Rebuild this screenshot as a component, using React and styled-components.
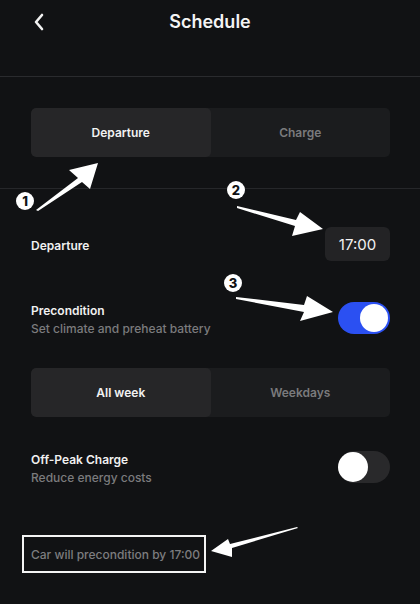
import React from "react";
import styled, { createGlobalStyle } from "styled-components";

const Global = createGlobalStyle`
  html, body { margin: 0; padding: 0; background: #111214; }
  body { font-family: Inter, "Noto Sans", "Liberation Sans", sans-serif; }
  * { box-sizing: border-box; }
`;

const Screen = styled.div`
  position: relative;
  width: 420px;
  height: 604px;
  background: #111214;
  color: #f2f2f2;
  overflow: hidden;
`;

const Header = styled.header`
  height: 77px;
  border-bottom: 1px solid #2a2b2e;
  display: grid;
  grid-template-columns: 60px 1fr 60px;
  align-items: start;
  padding-top: 9px;
`;

const BackButton = styled.button`
  background: none;
  border: none;
  padding: 0;
  margin-left: 31px;
  width: 16px;
  height: 26px;
  display: flex;
  align-items: center;
  justify-content: center;
  color: #f2f2f2;
`;

const Title = styled.h1`
  margin: 0;
  text-align: center;
  font-size: 18px;
  font-weight: 600;
  line-height: 26px;
  color: #f4f4f4;
`;

const TabSection = styled.div`
  padding: 31px 30px 31px 31px;
  border-bottom: 1px solid #26272a;
`;

const Segmented = styled.div`
  display: grid;
  grid-template-columns: 1fr 1fr;
  height: 49px;
  background: #1b1c1e;
  border-radius: 5px;
  overflow: hidden;
  margin-top: ${(p) => p.$mt || 0}px;
`;

const Segment = styled.div`
  display: flex;
  align-items: center;
  justify-content: center;
  font-size: 12px;
  font-weight: 600;
  background: ${(p) => (p.$active ? "#262628" : "transparent")};
  color: ${(p) => (p.$active ? "#f2f2f2" : "#7a7a7c")};
  border-radius: ${(p) => (p.$active ? "5px" : "0")};
`;

const Body = styled.div`
  padding: 0 30px 0 31px;
  display: flex;
  flex-direction: column;
`;

const Row = styled.div`
  display: flex;
  align-items: center;
  justify-content: space-between;
  height: ${(p) => p.$h}px;
  margin-top: ${(p) => p.$mt}px;
`;

const Labels = styled.div`
  display: flex;
  flex-direction: column;
  gap: 2px;
  padding-top: 4px;
`;

const Label = styled.div`
  font-size: 12px;
  font-weight: 600;
  color: #f0f0f0;
  line-height: 16px;
`;

const SoloLabel = styled(Label)`
  padding-top: 4px;
`;

const Sub = styled.div`
  font-size: 12px;
  font-weight: 500;
  color: #7b7b7d;
  line-height: 16px;
`;

const TimeBox = styled.div`
  width: 65px;
  height: 34px;
  border-radius: 6px;
  background: #232325;
  display: flex;
  align-items: center;
  justify-content: center;
  font-size: 15px;
  font-weight: 400;
  color: #f2f2f2;
`;

const Toggle = styled.div`
  width: 52px;
  height: 32px;
  border-radius: 16px;
  background: ${(p) => (p.$on ? "#2b50f2" : "#29292b")};
  display: flex;
  align-items: center;
  justify-content: ${(p) => (p.$on ? "flex-end" : "flex-start")};
  padding: ${(p) => (p.$on ? "0 2px" : "0")};
`;

const Knob = styled.div`
  width: ${(p) => (p.$on ? 28 : 30)}px;
  height: ${(p) => (p.$on ? 28 : 30)}px;
  border-radius: 50%;
  background: #ffffff;
`;

const Note = styled.div`
  margin-top: 52px;
  margin-left: -9px;
  align-self: flex-start;
  border: 2px solid #f4f4f4;
  padding: 0 4px 0 7px;
  height: 38px;
  display: flex;
  align-items: center;
  font-size: 12px;
  font-weight: 500;
  color: #7d7d7f;
`;

const Overlay = styled.svg`
  position: absolute;
  left: 0;
  top: 0;
  pointer-events: none;
`;

const Badge = ({ x, y, n }) => (
  <g>
    <circle cx={x} cy={y} r="9" fill="#ffffff" />
    <text
      x={x}
      y={y + 4.5}
      textAnchor="middle"
      fontSize="13"
      fontWeight="800"
      fill="#111214"
      fontFamily="Inter, sans-serif"
    >
      {n}
    </text>
  </g>
);

const Arrow = ({ pts }) => <polygon points={pts} fill="#ffffff" />;

export default function App() {
  return (
    <>
      <Global />
      <Screen>
        <Header>
          <BackButton aria-label="Back">
            <svg width="12" height="18" viewBox="0 0 12 18">
              <path d="M9 2 L3 9 L9 16" fill="none" stroke="#f2f2f2" strokeWidth="2.6" strokeLinecap="round" strokeLinejoin="round" />
            </svg>
          </BackButton>
          <Title>Schedule</Title>
          <div />
        </Header>
        <TabSection>
          <Segmented>
            <Segment $active>Departure</Segment>
            <Segment>Charge</Segment>
          </Segmented>
        </TabSection>
        <Body>
          <Row $h={34} $mt={38}>
            <SoloLabel>Departure</SoloLabel>
            <TimeBox>17:00</TimeBox>
          </Row>
          <Row $h={32} $mt={41}>
            <Labels>
              <Label>Precondition</Label>
              <Sub>Set climate and preheat battery</Sub>
            </Labels>
            <Toggle $on>
              <Knob $on />
            </Toggle>
          </Row>
          <Segmented $mt={34}>
            <Segment $active>All week</Segment>
            <Segment>Weekdays</Segment>
          </Segmented>
          <Row $h={32} $mt={34}>
            <Labels>
              <Label>Off-Peak Charge</Label>
              <Sub>Reduce energy costs</Sub>
            </Labels>
            <Toggle>
              <Knob />
            </Toggle>
          </Row>
          <Note>Car will precondition by 17:00</Note>
        </Body>
        <Overlay width="420" height="604" viewBox="0 0 420 604">
          <Badge x={25} y={201} n="1" />
          <Arrow pts="36,210 78,178 69,170 98,163 90,189 82,182 38,211" />
          <Badge x={236} y={190} n="2" />
          <Arrow pts="237,206 296,220 300,212 323,229 292,236 295,226 237,208" />
          <Badge x={233} y={283} n="3" />
          <Arrow pts="236,297 304,305 307,296 333,312 300,321 304,312 236,299" />
          <Arrow pts="298,528 232,548 232,557 211,551 228,539 230,544 297,527" />
        </Overlay>
      </Screen>
    </>
  );
}
